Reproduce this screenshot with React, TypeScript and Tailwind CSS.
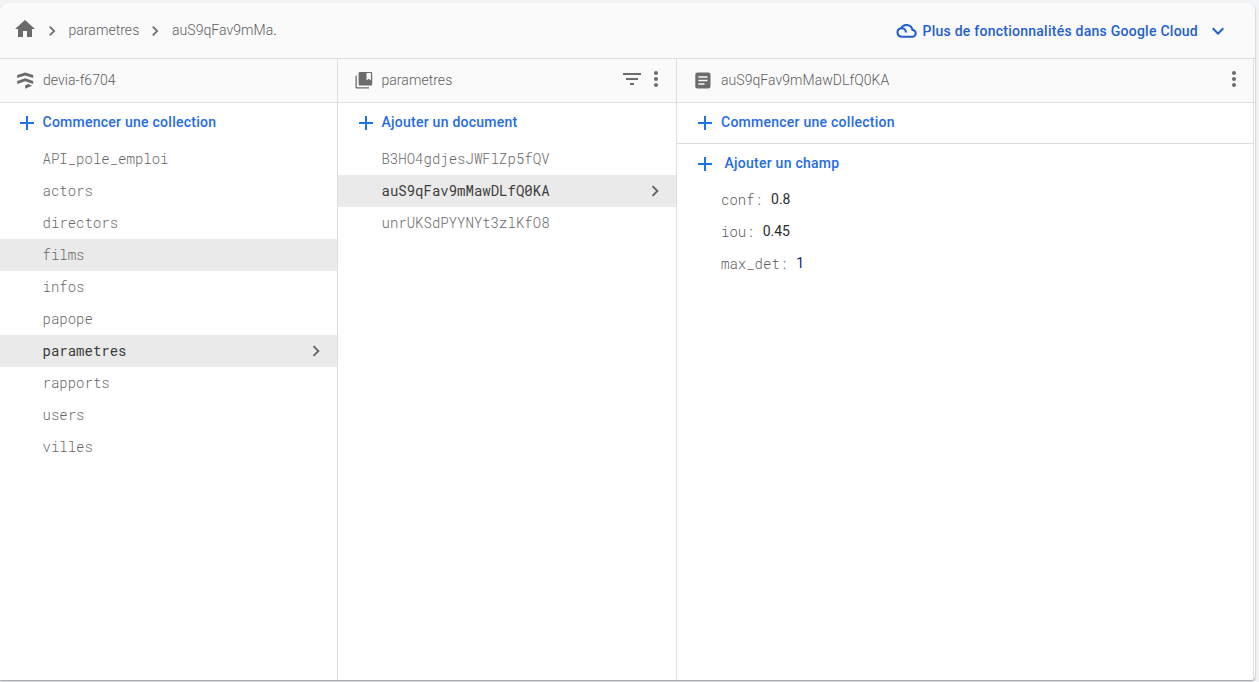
import type { ReactNode } from "react";

const sans = "font-['Roboto','Liberation_Sans',sans-serif]";
const mono = "font-['Roboto_Mono','Liberation_Mono',monospace]";

function Icon({ d, size = 24, className = "" }: { d: string; size?: number; className?: string }) {
  return (
    <svg width={size} height={size} viewBox="0 0 24 24" fill="currentColor" className={`shrink-0 ${className}`} aria-hidden="true">
      <path d={d} />
    </svg>
  );
}

const HOME = "M10 20v-6h4v6h5v-8h3L12 3 2 12h3v8z";
const RIGHT = "M10 6L8.59 7.41 13.17 12l-4.58 4.59L10 18l6-6z";
const DOWN = "M7.41 8.59L12 13.17l4.59-4.58L18 10l-6 6-6-6z";
const PLUS = "M19 13h-6v6h-2v-6H5v-2h6V5h2v6h6z";
const FILTER = "M10 18h4v-2h-4v2zM3 6v2h18V6H3zm3 7h12v-2H6v2z";
const DOTS =
  "M12 8c1.1 0 2-.9 2-2s-.9-2-2-2-2 .9-2 2 .9 2 2 2zm0 2c-1.1 0-2 .9-2 2s.9 2 2 2 2-.9 2-2-.9-2-2-2zm0 6c-1.1 0-2 .9-2 2s.9 2 2 2 2-.9 2-2-.9-2-2-2z";

function FirestoreIcon() {
  return (
    <svg width="17" height="17" viewBox="0 0 17 17" fill="currentColor" className="shrink-0" aria-hidden="true">
      <path d="M8.2 .4L.2 3v3l8-2.600 8 2.600V3z" />
      <path d="M8.2 6.200L.2 8.900v3l8-2.700 8 2.700v-3z" />
      <path d="M8.2 13.300v3.400l6.800-2.900-3.500-1.700z" />
    </svg>
  );
}

function CollectionIcon() {
  return (
    <svg width="18" height="17" viewBox="0 0 18 17" fill="currentColor" className="-ml-[.5px] shrink-0" aria-hidden="true">
      <path d="M.5 3.500h1.300v11.700H14v1.300H1.800A1.300 1.300 0 0 1 .5 15.200z" />
      <path fillRule="evenodd" d="M4.900 0h11a1.300 1.300 0 0 1 1.300 1.300v11a1.300 1.300 0 0 1-1.300 1.300h-11a1.300 1.300 0 0 1-1.300-1.300v-11A1.300 1.300 0 0 1 4.900 0zM11.500 1v7.400l2.200-1.700 2.200 1.700V1z" />
    </svg>
  );
}

function DocumentIcon() {
  return (
    <svg width="16" height="17" viewBox="0 0 16 17" className="shrink-0" aria-hidden="true">
      <rect x=".3" y=".5" width="15.200" height="16" rx="2.200" fill="currentColor" />
      <path d="M3.300 5h9.200M3.300 8.500h9.200M3.300 12h6.200" stroke="#fafafa" strokeWidth="1.400" />
    </svg>
  );
}

function CloudIcon() {
  return (
    <svg width="21" height="16" viewBox="0 0 21 16" fill="none" stroke="currentColor" strokeWidth="2.100" className="shrink-0" aria-hidden="true">
      <path d="M5.500 13.700h10.700a3.400 3.400 0 0 0 .3-6.800A6.200 6.200 0 0 0 5 5.200a4.300 4.300 0 0 0 .5 8.500z" />
      <path d="M4.700 5.300c3.100-.3 5 .8 5.300 4.200" />
    </svg>
  );
}

function Action({ label, wide = false, inset = "pl-[15px]" }: { label: string; wide?: boolean; inset?: string }) {
  return (
    <button className={`flex h-10 w-full items-center text-left text-sm font-medium tracking-[0.25px] text-[#1f6ce6] ${inset}`}>
      <Icon d={PLUS} className="text-[#1a73e8]" />
      <span className={`pb-0.5 ${wide ? "ml-[7.5px]" : "ml-1"}`}>{label}</span>
    </button>
  );
}

function PanelHeader({ icon, title, inset = "pl-[17px]", children }: { icon: ReactNode; title: string; inset?: string; children?: ReactNode }) {
  return (
    <div className="flex h-11 items-center border-b border-[#dedede] bg-[#fafafa] text-sm text-[#6b6b6b]">
      <div className={`flex shrink-0 items-center ${inset}`}>
        <div className="w-[26px]">{icon}</div>
      </div>
      <span className="grow pb-0.5 font-light tracking-[0.05px] text-[#5c5c5c]">{title}</span>
      {children && <div className="flex items-center pb-[3px]">{children}</div>}
    </div>
  );
}

function Row({ label, state = "", inset = "pl-[42.5px]" }: { label: string; state?: "" | "hover" | "active"; inset?: string }) {
  return (
    <li
      className={`flex h-8 items-center justify-between pr-[10px] text-sm ${inset} ${mono} ${
        state ? "bg-[#eaeaea]" : ""
      } ${state === "active" ? "font-normal text-[#3c3c3c]" : "font-light text-[#666666]"}`}
    >
      {label}
      {state === "active" && <Icon d={RIGHT} size={22} className="text-[#616161]" />}
    </li>
  );
}

function Field({ name, value, blue = false }: { name: string; value: string; blue?: boolean }) {
  return (
    <div className="flex h-8 items-center pl-11 text-sm">
      <span className={`font-light text-[#5c5c5c] ${mono}`}>{name}:</span>
      <span className={`ml-2 pb-0.5 ${blue ? "text-[#1a1a8c]" : "text-[#2b2b2b]"}`}>{value}</span>
    </div>
  );
}

export default function App() {
  return (
    <div className={`h-[682px] w-[1259px] overflow-hidden bg-[#f3f4f6] pt-[3px] ${sans}`}>
      <main className="flex h-[677px] w-[1255px] flex-col overflow-hidden rounded-tl-lg rounded-tr-lg rounded-br bg-white shadow-[0_1px_2px_rgba(0,0,0,0.4)]">
        <header className="flex h-14 shrink-0 items-center border-b border-[#dedede] bg-[#fafafa] text-sm text-[#6b6b6b]">
          <Icon d={HOME} className="mb-[3px] ml-[12.5px]" />
          <Icon d={RIGHT} size={20} className="ml-[5px]" />
          <span className="ml-[7px] w-[71.5px] pb-0.5 font-light tracking-[0.05px] text-[#5c5c5c]">parametres</span>
          <Icon d={RIGHT} size={20} className="ml-[5px]" />
          <span className="ml-[7px] pb-0.5 font-light tracking-[0.05px] text-[#5c5c5c]">auS9qFav9mMa<span className="font-normal">.</span></span>
          <button className="ml-auto flex items-center pr-[25px] font-medium tracking-[0.25px] text-[#1f60d0]">
            <CloudIcon />
            <span className="ml-[5px]">Plus de fonctionnalités dans Google Cloud</span>
            <Icon d={DOWN} className="ml-2" />
          </button>
        </header>
        <div className="flex min-h-0 grow">
          <section className="w-[338px] shrink-0 border-r border-[#dedede]">
            <PanelHeader icon={<FirestoreIcon />} title="devia-f6704" />
            <Action label="Commencer une collection" inset="pl-[14.5px]" />
            <ul>
              <Row label="API_pole_emploi" />
              <Row label="actors" />
              <Row label="directors" />
              <Row label="films" state="hover" />
              <Row label="infos" />
              <Row label="papope" />
              <Row label="parametres" state="active" />
              <Row label="rapports" />
              <Row label="users" />
              <Row label="villes" />
            </ul>
          </section>
          <section className="w-[339px] shrink-0 border-r border-[#dedede]">
            <PanelHeader icon={<CollectionIcon />} title="parametres" inset="pl-[17.5px]">
              <Icon d={FILTER} />
              <Icon d={DOTS} className="mr-2" />
            </PanelHeader>
            <Action label="Ajouter un document" inset="pl-[15.5px]" />
            <ul>
              <Row label="B3HO4gdjesJWFlZp5fQV" inset="pl-[43.5px]" />
              <Row label="auS9qFav9mMawDLfQ0KA" state="active" inset="pl-[43.5px]" />
              <Row label="unrUKSdPYYNYt3zlKfO8" inset="pl-[43.5px]" />
            </ul>
          </section>
          <section className="w-[577px] shrink-0 border-r border-[#dedede]">
            <PanelHeader icon={<DocumentIcon />} title="auS9qFav9mMawDLfQ0KA" inset="pl-[18px]">
              <Icon d={DOTS} className="mr-[7.5px]" />
            </PanelHeader>
            <div className="border-b border-[#dedede]">
              <Action label="Commencer une collection" inset="pl-4" />
            </div>
            <Action label="Ajouter un champ" wide inset="pl-4" />
            <Field name="conf" value="0.8" />
            <Field name="iou" value="0.45" />
            <Field name="max_det" value="1" blue />
          </section>
        </div>
      </main>
    </div>
  );
}
